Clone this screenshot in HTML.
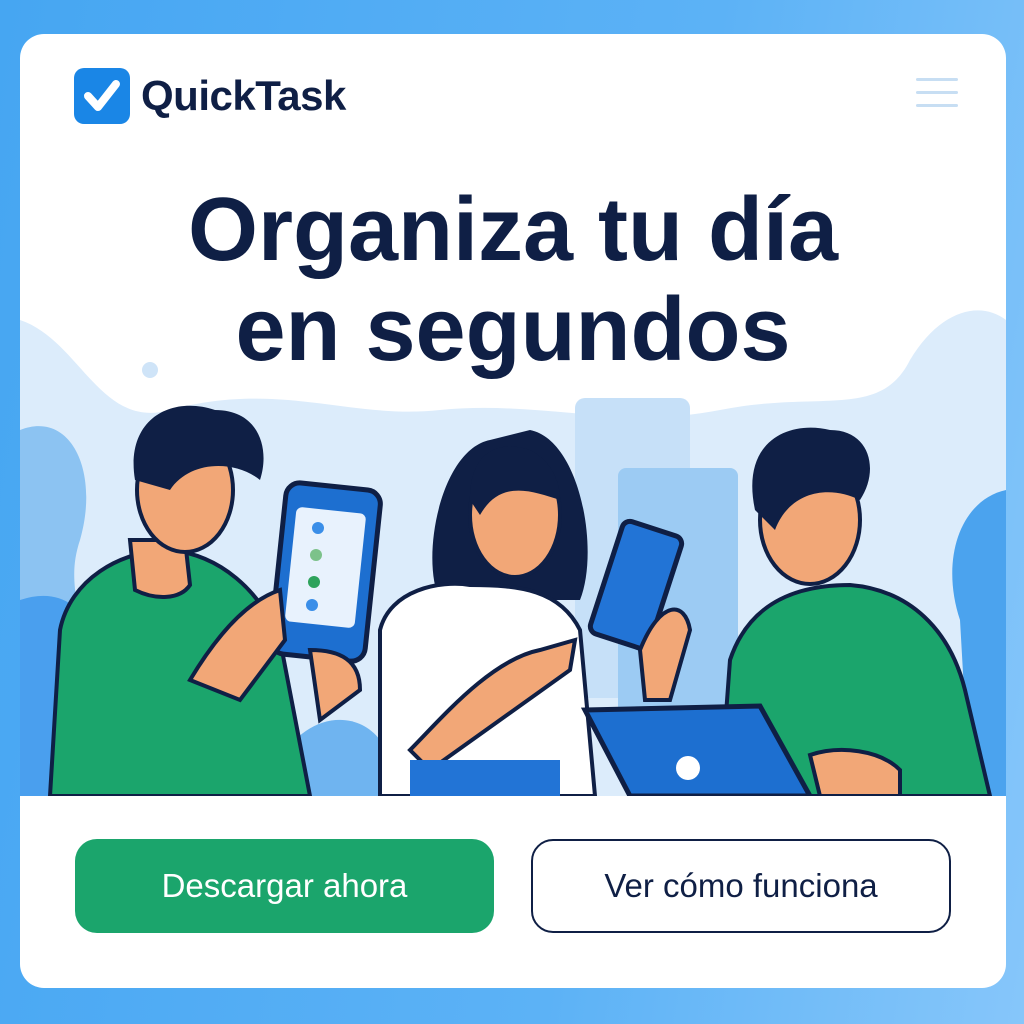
<!DOCTYPE html>
<html><head><meta charset="utf-8"><style>
*{margin:0;padding:0;box-sizing:border-box}
body{width:1024px;height:1024px;overflow:hidden;background:linear-gradient(100deg,#46a6f2 0%,#5cb2f6 60%,#86c6fa 100%);font-family:"Liberation Sans",sans-serif;position:relative}
.card{position:absolute;left:20px;top:34px;width:986px;height:954px;background:#fff;border-radius:24px;overflow:hidden}
.logo{position:absolute;left:54px;top:34px;width:56px;height:56px;background:#1a86e6;border-radius:10px}
.brand{position:absolute;left:121px;top:38px;font-size:42px;font-weight:700;color:#0f1f45;letter-spacing:-0.5px}
.menu{position:absolute;left:896px;top:44px;width:42px}
.menu div{height:3px;background:#c7def3;margin-bottom:10px;border-radius:2px}
h1{position:absolute;left:0;width:986px;top:146px;text-align:center;font-size:90px;line-height:100px;font-weight:700;color:#0f1f45;letter-spacing:0px}
.btn{position:absolute;top:805px;height:94px;border-radius:22px;font-size:33px;display:flex;align-items:center;justify-content:center}
.b1{left:55px;width:419px;background:#1ba56c;color:#fff}
.b2{left:511px;width:420px;border:2px solid #0f1f45;color:#0f1f45}
svg{position:absolute;left:0;top:266px}
</style></head><body>
<div class="card">
<svg width="986" height="496" viewBox="0 0 986 496">
<path d="M0 20 C60 40 80 130 150 110 C260 80 330 120 420 110 C520 100 600 130 700 110 C800 90 860 120 890 60 C920 10 960 0 986 20 V496 H0Z" fill="#dcecfb"/>
<rect x="555" y="98" width="115" height="300" rx="10" fill="#c6e0f8"/>
<rect x="598" y="168" width="120" height="260" rx="8" fill="#9ccbf3"/>
<path d="M0 130 C50 110 80 170 60 240 C40 300 80 320 60 496 H0Z" fill="#8cc3f2"/>
<path d="M986 190 C940 200 920 260 940 320 L950 496 H986Z" fill="#4ba3ee"/>
<path d="M0 300 C60 280 100 330 90 496 H0Z" fill="#4a9fee"/>
<path d="M250 496 C260 420 330 400 360 440 L380 496Z" fill="#6fb4f0"/>
<ellipse cx="130" cy="70" rx="8" ry="8" fill="#cfe4f8"/>
<path d="M30 496 L40 330 C50 280 100 250 150 250 C200 255 240 290 260 340 L290 496Z" fill="#1ba56c" stroke="#0f1f45" stroke-width="4"/>
<path d="M110 240 L115 290 C135 300 160 300 170 285 L165 240Z" fill="#f2a777" stroke="#0f1f45" stroke-width="4"/>
<ellipse cx="165" cy="190" rx="48" ry="62" fill="#f2a777" stroke="#0f1f45" stroke-width="4"/>
<path d="M115 180 C105 120 150 95 195 110 C240 110 250 150 240 180 C215 160 170 160 150 190 Z" fill="#0f1f45"/>
<rect x="258" y="186" width="95" height="172" rx="14" fill="#1d6fd0" stroke="#0f1f45" stroke-width="5" transform="rotate(6 305 272)"/>
<rect x="270" y="210" width="70" height="115" rx="6" fill="#e8f2fd" transform="rotate(6 305 272)"/>
<circle cx="298" cy="228" r="6" fill="#3a8ee8"/><circle cx="296" cy="255" r="6" fill="#7cc28a"/><circle cx="294" cy="282" r="6" fill="#2ea35c"/><circle cx="292" cy="305" r="6" fill="#3a8ee8"/>
<path d="M170 380 C200 330 230 300 260 290 L265 340 L220 400Z" fill="#f2a777" stroke="#0f1f45" stroke-width="4"/>
<path d="M290 350 C320 350 340 360 340 390 L300 420Z" fill="#f2a777" stroke="#0f1f45" stroke-width="4"/>
<path d="M470 140 C420 150 400 260 420 300 L560 300 C580 250 560 140 510 130Z" fill="#0f1f45"/>
<path d="M360 496 L360 330 C370 290 420 280 450 285 C500 285 540 290 560 330 L575 496Z" fill="#fff" stroke="#0f1f45" stroke-width="4"/>
<ellipse cx="495" cy="215" rx="45" ry="62" fill="#f2a777" stroke="#0f1f45" stroke-width="4"/>
<path d="M450 200 C450 150 480 140 510 150 C530 160 540 180 540 200 C510 190 480 180 460 215Z" fill="#0f1f45"/>
<path d="M390 450 C420 420 470 360 520 350 L555 340 L550 370 L480 420 L410 470Z" fill="#f2a777" stroke="#0f1f45" stroke-width="4"/>
<rect x="585" y="226" width="62" height="118" rx="8" fill="#2274d6" stroke="#0f1f45" stroke-width="5" transform="rotate(18 616 285)"/>
<path d="M620 350 C640 300 665 300 670 330 L650 400 L625 400Z" fill="#f2a777" stroke="#0f1f45" stroke-width="4"/>
<rect x="390" y="460" width="150" height="36" fill="#2274d6"/>
<path d="M700 496 L710 360 C730 300 780 285 830 285 C890 290 930 330 945 390 L970 496Z" fill="#1ba56c" stroke="#0f1f45" stroke-width="4"/>
<ellipse cx="790" cy="220" rx="50" ry="64" fill="#f2a777" stroke="#0f1f45" stroke-width="4"/>
<path d="M735 210 C720 140 770 120 810 130 C850 130 860 170 840 200 C810 185 770 190 755 230Z" fill="#0f1f45"/>
<path d="M565 410 L740 406 L790 496 L610 496Z" fill="#1d6fd0" stroke="#0f1f45" stroke-width="5"/>
<circle cx="668" cy="468" r="12" fill="#fff"/>
<path d="M790 455 C820 445 860 450 880 470 L880 496 L800 496Z" fill="#f2a777" stroke="#0f1f45" stroke-width="4"/>
</svg>
<div class="logo"><svg style="position:absolute;left:0;top:0" width="56" height="56" viewBox="0 0 56 56"><path d="M14 28 L24 39 L42 16" fill="none" stroke="#fff" stroke-width="8" stroke-linecap="round" stroke-linejoin="round"/></svg></div>
<div class="brand">QuickTask</div>
<div class="menu"><div></div><div></div><div></div></div>
<h1>Organiza tu día<br>en segundos</h1>
<div class="btn b1">Descargar ahora</div>
<div class="btn b2">Ver cómo funciona</div>
</div>
</body></html>
